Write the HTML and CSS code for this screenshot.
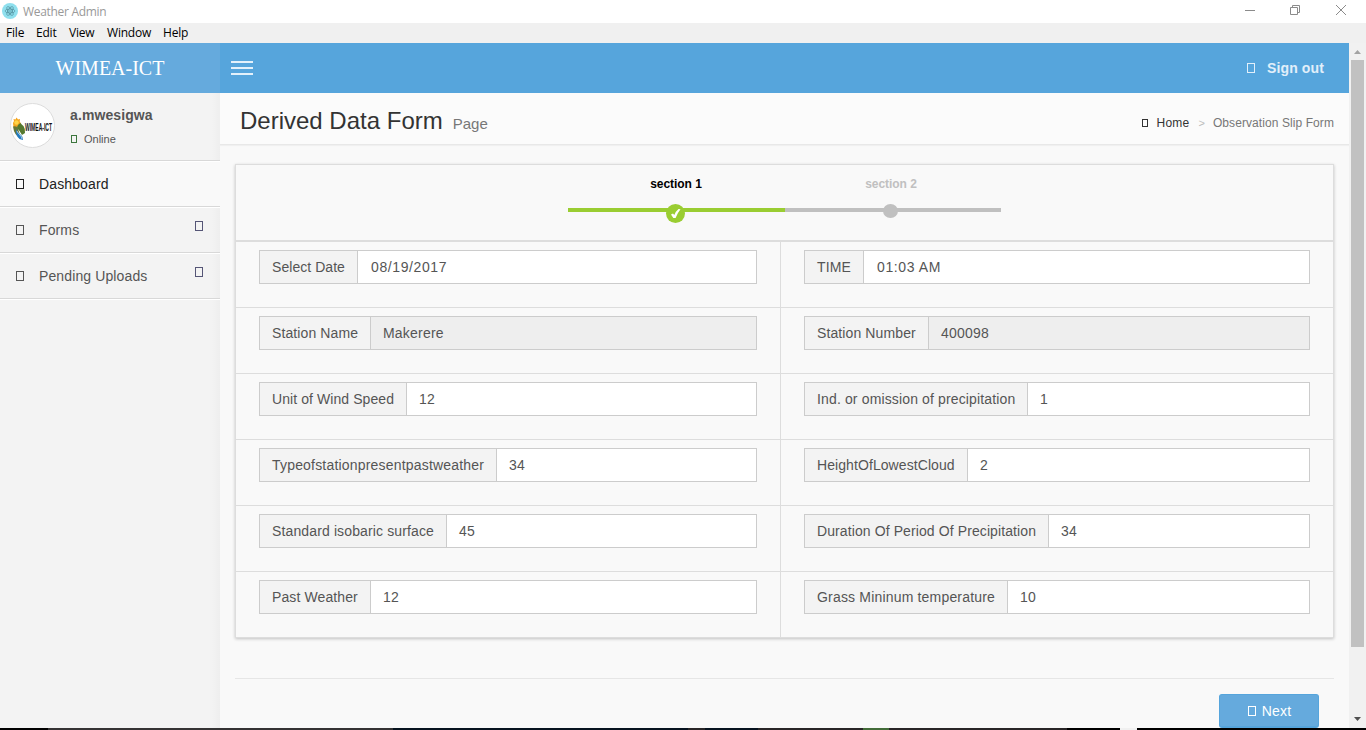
FILE: index.html
```html
<!DOCTYPE html>
<html lang="en">
<head>
<meta charset="utf-8">
<title>Weather Admin</title>
<link rel="stylesheet" href="styles.css">
</head>
<body>
<div class="window">
  <div class="titlebar">
    <svg class="app-icon" width="16" height="16" viewBox="0 0 16 16"><circle cx="8" cy="8" r="8" fill="#8fe0ee"/><g fill="none" stroke="#4b8794" stroke-width=".6"><ellipse cx="8" cy="8" rx="5" ry="2"/><ellipse cx="8" cy="8" rx="5" ry="2" transform="rotate(60 8 8)"/><ellipse cx="8" cy="8" rx="5" ry="2" transform="rotate(120 8 8)"/></g><circle cx="8" cy="8" r=".7" fill="#4b8794"/></svg>
    <span class="app-title">Weather Admin</span>
    <svg class="controls" width="102" height="12" viewBox="0 0 102 12" fill="none" stroke="#8b8b8b"><path d="M0 6.500h10M45.500 3.500h7v7h-7zM47.500 3.500v-2h7v7h-2M91 1l10 10M101 1l-10 10"/></svg>
  </div>
  <div class="menubar"><span class="m-file">File</span><span class="m-edit">Edit</span><span class="m-view">View</span><span class="m-window">Window</span><span>Help</span></div>
  <div class="app">
    <div class="page">
      <header class="topbar">
        <div class="brand">WIMEA-ICT</div>
        <div class="burger"><i></i><i></i><i></i></div>
        <div class="signout"><i class="box"></i><b>Sign out</b></div>
      </header>
      <div class="body">
        <aside class="sidebar">
          <div class="user">
            <svg width="45" height="45" viewBox="0 0 45 45"><circle cx="22.500" cy="22.500" r="22" fill="#fff" stroke="#dcdcdc"/><path d="M3 20l1-2-.5-2 2 .5 1-2 1.500 2 2-.5-.3 2.500 1.300 2-1.500 3-6 1z" fill="#f5a51d"/><circle cx="6.500" cy="19.500" r="2.200" fill="#ffd448"/><path d="M3 23.500q4-1 5 2l3 10q-7-3-8-12z" fill="#667638"/><path d="M7 25q0-3 3.500-5 1.500 2 3 3 2 3 1.500 7l-3 2q-2-4-5-7z" fill="#55792f"/><path d="M6 26q1 3 4 5t3 6l-3.500-1q-4-3-3.500-10z" fill="#237bc0"/><path d="M7 28q1 2 3 4t2 4" fill="none" stroke="#fff" stroke-width=".6"/><text x="15" y="28" font-family="Liberation Sans" font-size="10" font-weight="700" textLength="27" lengthAdjust="spacingAndGlyphs" fill="#111">WIMEA-ICT</text></svg>
            <div class="who"><b>a.mwesigwa</b><span><i class="box small green"></i>Online</span></div>
          </div>
          <a class="item active"><i class="box"></i><span>Dashboard</span></a>
          <a class="item"><i class="box"></i><span>Forms</span><i class="box toggle"></i></a>
          <a class="item"><i class="box"></i><span>Pending Uploads</span><i class="box toggle"></i></a>
        </aside>
        <main class="main">
          <div class="heading">
            <h1>Derived Data Form</h1><small>Page</small>
            <div class="crumbs"><i class="box small"></i><span class="home">Home</span><span class="sep">&gt;</span><span>Observation Slip Form</span></div>
          </div>
          <section class="card">
            <div class="steps">
              <div class="step done"><b>section 1</b><div class="track"><svg width="19" height="19" viewBox="0 0 19 19"><circle cx="9.500" cy="9.500" r="9.500" fill="#9acd32"/><path d="M5 10.500l2-1 1.300 1.500Q10 7 12.500 5l2 .3Q11.500 9 9.600 14H7.300z" fill="#fff"/></svg></div></div>
              <div class="step"><b>section 2</b><div class="track"><i class="dot"></i></div></div>
            </div>
            <div class="grid">
              <div class="cell"><div class="field"><label class="w99">Select Date</label><div class="value date">08/19/2017</div></div></div>
              <div class="cell"><div class="field"><label class="w60">TIME</label><div class="value time">01:03 AM</div></div></div>
              <div class="cell"><div class="field"><label class="w112">Station Name</label><div class="value off">Makerere</div></div></div>
              <div class="cell"><div class="field"><label class="w125">Station Number</label><div class="value off">400098</div></div></div>
              <div class="cell"><div class="field"><label class="w148">Unit of Wind Speed</label><div class="value">12</div></div></div>
              <div class="cell"><div class="field"><label class="w224">Ind. or omission of precipitation</label><div class="value">1</div></div></div>
              <div class="cell"><div class="field"><label class="w238">Typeofstationpresentpastweather</label><div class="value">34</div></div></div>
              <div class="cell"><div class="field"><label class="w164">HeightOfLowestCloud</label><div class="value">2</div></div></div>
              <div class="cell"><div class="field"><label class="w188">Standard isobaric surface</label><div class="value">45</div></div></div>
              <div class="cell"><div class="field"><label class="w245">Duration Of Period Of Precipitation</label><div class="value">34</div></div></div>
              <div class="cell"><div class="field"><label class="w112">Past Weather</label><div class="value">12</div></div></div>
              <div class="cell"><div class="field"><label class="w204">Grass Mininum temperature</label><div class="value">10</div></div></div>
            </div>
          </section>
          <div class="footer"><div class="next"><i class="box"></i>Next</div></div>
        </main>
      </div>
    </div>
    <div class="scroll">
      <svg width="17" height="17"><path d="M5 11l3.500-4 3.500 4z" fill="#a3a3a3"/></svg>
      <div class="thumb"></div>
      <svg width="17" height="17"><path d="M5 6h7l-3.500 4z" fill="#505050"/></svg>
    </div>
  </div>
  <div class="strip"><i class="s1"></i><i class="s2"></i><i class="s3"></i><i class="s4"></i><i class="s5"></i><i class="s6"></i><i class="s7"></i><i class="s8"></i><i class="s9"></i></div>
</div>
</body>
</html>
```

FILE: styles.css
```css
* { box-sizing: border-box; }
body { margin: 0; font: 14px/20px "Liberation Sans", Arial, sans-serif; color: #555; }
.window { width: 1366px; height: 730px; display: flex; flex-direction: column; overflow: hidden; background: #fff; }
.titlebar { height: 23px; display: flex; align-items: center; padding: 0 19px 0 2px; font: 12px "Open Sans", sans-serif; color: #999; }
.app-icon { margin-top: -1px; }
.app-title { margin-left: 5px; letter-spacing: -.3px; }
.controls { margin: -3px 0 0 auto; }
.menubar { height: 20px; background: #f0f0f0; display: flex; padding-left: 6px; font: 12px/20px "Open Sans", sans-serif; letter-spacing: -.2px; color: #000; }
.m-file { width: 30px; }
.m-edit { width: 33px; }
.m-view { width: 38px; }
.m-window { width: 56px; }
.app { display: flex; height: 685px; }
.page { width: 1349px; }
.topbar { height: 50px; display: flex; background: #56a5dc; align-items: center; }
.brand { width: 220px; height: 50px; background: #65aadd; color: #fff; text-align: center; font: 20px/50px "Liberation Serif", serif; }
.burger { margin-left: 11px; width: 22px; display: grid; gap: 4px; }
.burger i { height: 2px; background: #e3f1fb; }
.signout { margin-left: auto; padding-right: 25px; display: flex; align-items: center; color: #e1effa; letter-spacing: .13px; }
.signout b { margin-left: 12px; }
.box { display: inline-block; flex: none; width: 8px; height: 10px; border: 1px solid; }
.small { width: 6px; height: 8px; }
.green { color: #3c763d; }
.body { display: flex; height: 635px; }
.sidebar { width: 220px; background: linear-gradient(90deg, #f3f3f3 212px, #eee); }
.user { height: 67px; padding: 10px; display: flex; }
.who { padding: 2px 0 0 15px; display: flex; flex-direction: column; }
.who b { letter-spacing: .1px; }
.who span { font-size: 11px; margin-top: 4px; }
.who .box { margin: 0 7px 0 1px; }
.item { height: 46px; display: flex; align-items: center; padding-left: 16px; border-top: 1px solid #d8d8d8; letter-spacing: .12px; box-shadow: inset 0 1px #fff; }
.item:last-child { height: 47px; border-bottom: 1px solid #d8d8d8; box-shadow: inset 0 1px #fff, 0 1px #fff; }
.item span { margin-left: 15px; }
.active { background: #f9f9f9; color: #222; }
.toggle { margin: 0 17px 8px auto; color: #555576; }
.main { width: 1129px; background: #f9f9f9; }
.heading { height: 52px; display: flex; align-items: baseline; padding: 12px 15px 0 20px; background: #fbfbfb; border-bottom: 1px solid #e8e8e8; box-shadow: 0 1px 1px #f0f0f0; }
h1 { font-size: 24px; line-height: 32px; font-weight: 400; margin: 0; color: #333; }
.heading small { font-size: 15px; color: #777; margin-left: 10px; }
.crumbs { margin: -1px 0 0 auto; display: flex; align-items: center; align-self: flex-start; height: 38px; font-size: 12px; color: #777; letter-spacing: .08px; }
.crumbs .box { color: #333; }
.home { color: #333; margin-left: 9px; letter-spacing: .2px; }
.sep { color: #bbb; font-size: 11px; margin: 0 8px 0 9px; }
.card { margin: 19px 15px 0; height: 474px; border: 1px solid #ddd; box-shadow: 0 1px 3px rgba(0,0,0,.22); }
.steps { height: 77px; display: flex; padding: 9px 0 0 332px; border-bottom: 2px solid #ddd; }
.step { width: 216px; text-align: center; color: #c0c0c0; font-size: 12px; letter-spacing: -.05px; }
.step b { margin-right: 4px; }
.done { width: 217px; color: #000; }
.done b { margin-right: 1px; }
.track { margin-top: 14px; height: 4px; background: #c0c0c0; display: flex; justify-content: center; align-items: flex-start; }
.done .track { background: #9acd32; }
.track svg { flex: none; margin: -4px 2px 0 0; }
.dot { flex: none; width: 15px; height: 14px; border-radius: 50%; background: #c0c0c0; margin: -4px 5px 0 0; }
.grid { display: grid; grid-template-columns: 545px 552px; grid-auto-rows: 66px; }
.cell { padding: 8px 23px 0; border-bottom: 1px solid #ddd; }
.cell:nth-child(odd) { border-right: 1px solid #ddd; }
.field { height: 34px; display: flex; border: 1px solid #ccc; background: #fff; }
label { flex: none; padding-left: 12px; line-height: 32px; background: #f3f3f3; border-right: 1px solid #ccc; white-space: nowrap; letter-spacing: .11px; }
.value { flex: 1; padding-left: 12px; line-height: 32px; letter-spacing: .2px; }
.off { background: #eee; }
.date, .time { padding-left: 13px; letter-spacing: .6px; }
.w99 { width: 98px; letter-spacing: .05px; }
.w60 { width: 59px; }
.w112 { width: 111px; }
.w125 { width: 124px; }
.w148 { width: 147px; letter-spacing: .08px; }
.w224 { width: 223px; letter-spacing: .14px; }
.w238 { width: 237px; letter-spacing: .19px; }
.w164 { width: 163px; letter-spacing: .08px; }
.w188 { width: 187px; letter-spacing: .13px; }
.w245 { width: 244px; letter-spacing: .1px; }
.w204 { width: 203px; letter-spacing: .18px; }
.footer { margin: 40px 15px 0; padding: 15px 15px 0 0; border-top: 1px solid #e6e6e6; display: flex; justify-content: flex-end; }
.next { width: 100px; height: 34px; border: 1px solid #56a5dc; border-bottom-width: 2px; border-radius: 3px; background: #65aadd; color: #fff; display: flex; align-items: center; justify-content: center; gap: 6px; padding-left: 1px; letter-spacing: .15px; }
.scroll { width: 17px; background: #f1f1f1; display: flex; flex-direction: column; }
.scroll svg { display: block; }
.thumb { width: 13px; height: 587px; margin: 0 0 64px 2px; background: #c1c1c1; }
.strip { height: 2px; display: flex; background: #000; }
.s1 { width: 48px; background: #000; }
.s2 { width: 345px; background: #353334; }
.s3 { width: 295px; background: #07131f; }
.s4 { width: 17px; background: #292627; }
.s5 { width: 53px; background: #07131f; }
.s6 { width: 105px; background: #292627; }
.s7 { width: 26px; background: #436c39; }
.s8 { width: 178px; background: #292627; }
.s9 { width: 17px; margin-left: 53px; background: #f0f0f0; }
```
